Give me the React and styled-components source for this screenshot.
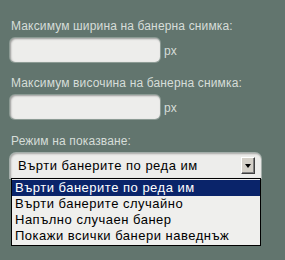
import React from 'react';
import styled, { createGlobalStyle } from 'styled-components';

const GlobalStyle = createGlobalStyle`
  html, body {
    margin: 0;
    padding: 0;
    background: #62756e;
  }
  body {
    font-family: "Liberation Sans", Arial, sans-serif;
  }
`;

const Panel = styled('div')`
  width: 285px;
  height: 260px;
  box-sizing: border-box;
  padding: 19px 0 0 10px;
  background: #62756e;
  overflow: hidden;
`;

const Field = styled('div')`
  margin-bottom: ${p => p.$gap || 14}px;
`;

const Label = styled('div')`
  font-size: 12px;
  line-height: 14px;
  letter-spacing: 0.15px;
  color: #d6ddd9;
  margin-bottom: 5px;
  padding-left: 1px;
`;

const Row = styled('div')`
  display: flex;
  align-items: center;
  gap: 4px;
`;

const TextInput = styled('div')`
  width: 150px;
  height: 24px;
  box-sizing: border-box;
  border-radius: 5px;
  background: #ededeb;
  box-shadow: inset 1px 1px 2px rgba(0, 0, 0, 0.35), 0 0 0 1px rgba(220, 225, 222, 0.35);
`;

const Unit = styled('span')`
  font-size: 12px;
  color: #d6ddd9;
  margin-top: 1px;
`;

const SelectBox = styled('div')`
  width: 251px;
  height: 25px;
  box-sizing: border-box;
  display: flex;
  align-items: center;
  justify-content: space-between;
  padding: 0 6px 0 8px;
  border-radius: 6px 6px 0 0;
  background: #ededeb;
  box-shadow: inset 1px 1px 2px rgba(0, 0, 0, 0.3), 0 0 0 1px rgba(230, 232, 230, 0.5);
  font-size: 13px;
  letter-spacing: 0.5px;
  color: #000;
`;

const ArrowButton = styled('div')`
  width: 14px;
  height: 17px;
  box-sizing: border-box;
  display: flex;
  align-items: center;
  justify-content: center;
  background: #d4d0c8;
  border-top: 1px solid #ffffff;
  border-left: 1px solid #ffffff;
  border-right: 1px solid #404040;
  border-bottom: 1px solid #404040;
  box-shadow: inset -1px -1px 0 #808080;
`;

const Triangle = styled('span')`
  width: 0;
  height: 0;
  border-left: 3.5px solid transparent;
  border-right: 3.5px solid transparent;
  border-top: 4px solid #000;
  margin-top: 1px;
`;

const OptionList = styled('div')`
  width: 250px;
  margin-left: 1px;
  box-sizing: border-box;
  border: 1px solid #000;
  background: #efefed;
  padding: 1px 0 1px 0;
`;

const Option = styled('div')`
  height: 16px;
  line-height: 16px;
  font-size: 13px;
  letter-spacing: 0.5px;
  padding-left: 3px;
  color: ${p => (p.$active ? '#ffffff' : '#000000')};
  background: ${p => (p.$active ? '#0a246a' : 'transparent')};
  white-space: nowrap;
`;

const options = [
  'Върти банерите по реда им',
  'Върти банерите случайно',
  'Напълно случаен банер',
  'Покажи всички банери наведнъж',
];

const App = () => (
  <>
    <GlobalStyle />
    <Panel>
      <Field>
        <Label>Максимум ширина на банерна снимка:</Label>
        <Row>
          <TextInput />
          <Unit>px</Unit>
        </Row>
      </Field>
      <Field $gap={15}>
        <Label>Максимум височина на банерна снимка:</Label>
        <Row>
          <TextInput />
          <Unit>px</Unit>
        </Row>
      </Field>
      <Field $gap={0}>
        <Label>Режим на показване:</Label>
        <SelectBox>
          <span>{options[0]}</span>
          <ArrowButton><Triangle /></ArrowButton>
        </SelectBox>
        <OptionList>
          {options.map((o, i) => (
            <Option key={o} $active={i === 0}>{o}</Option>
          ))}
        </OptionList>
      </Field>
    </Panel>
  </>
);

export default App;
